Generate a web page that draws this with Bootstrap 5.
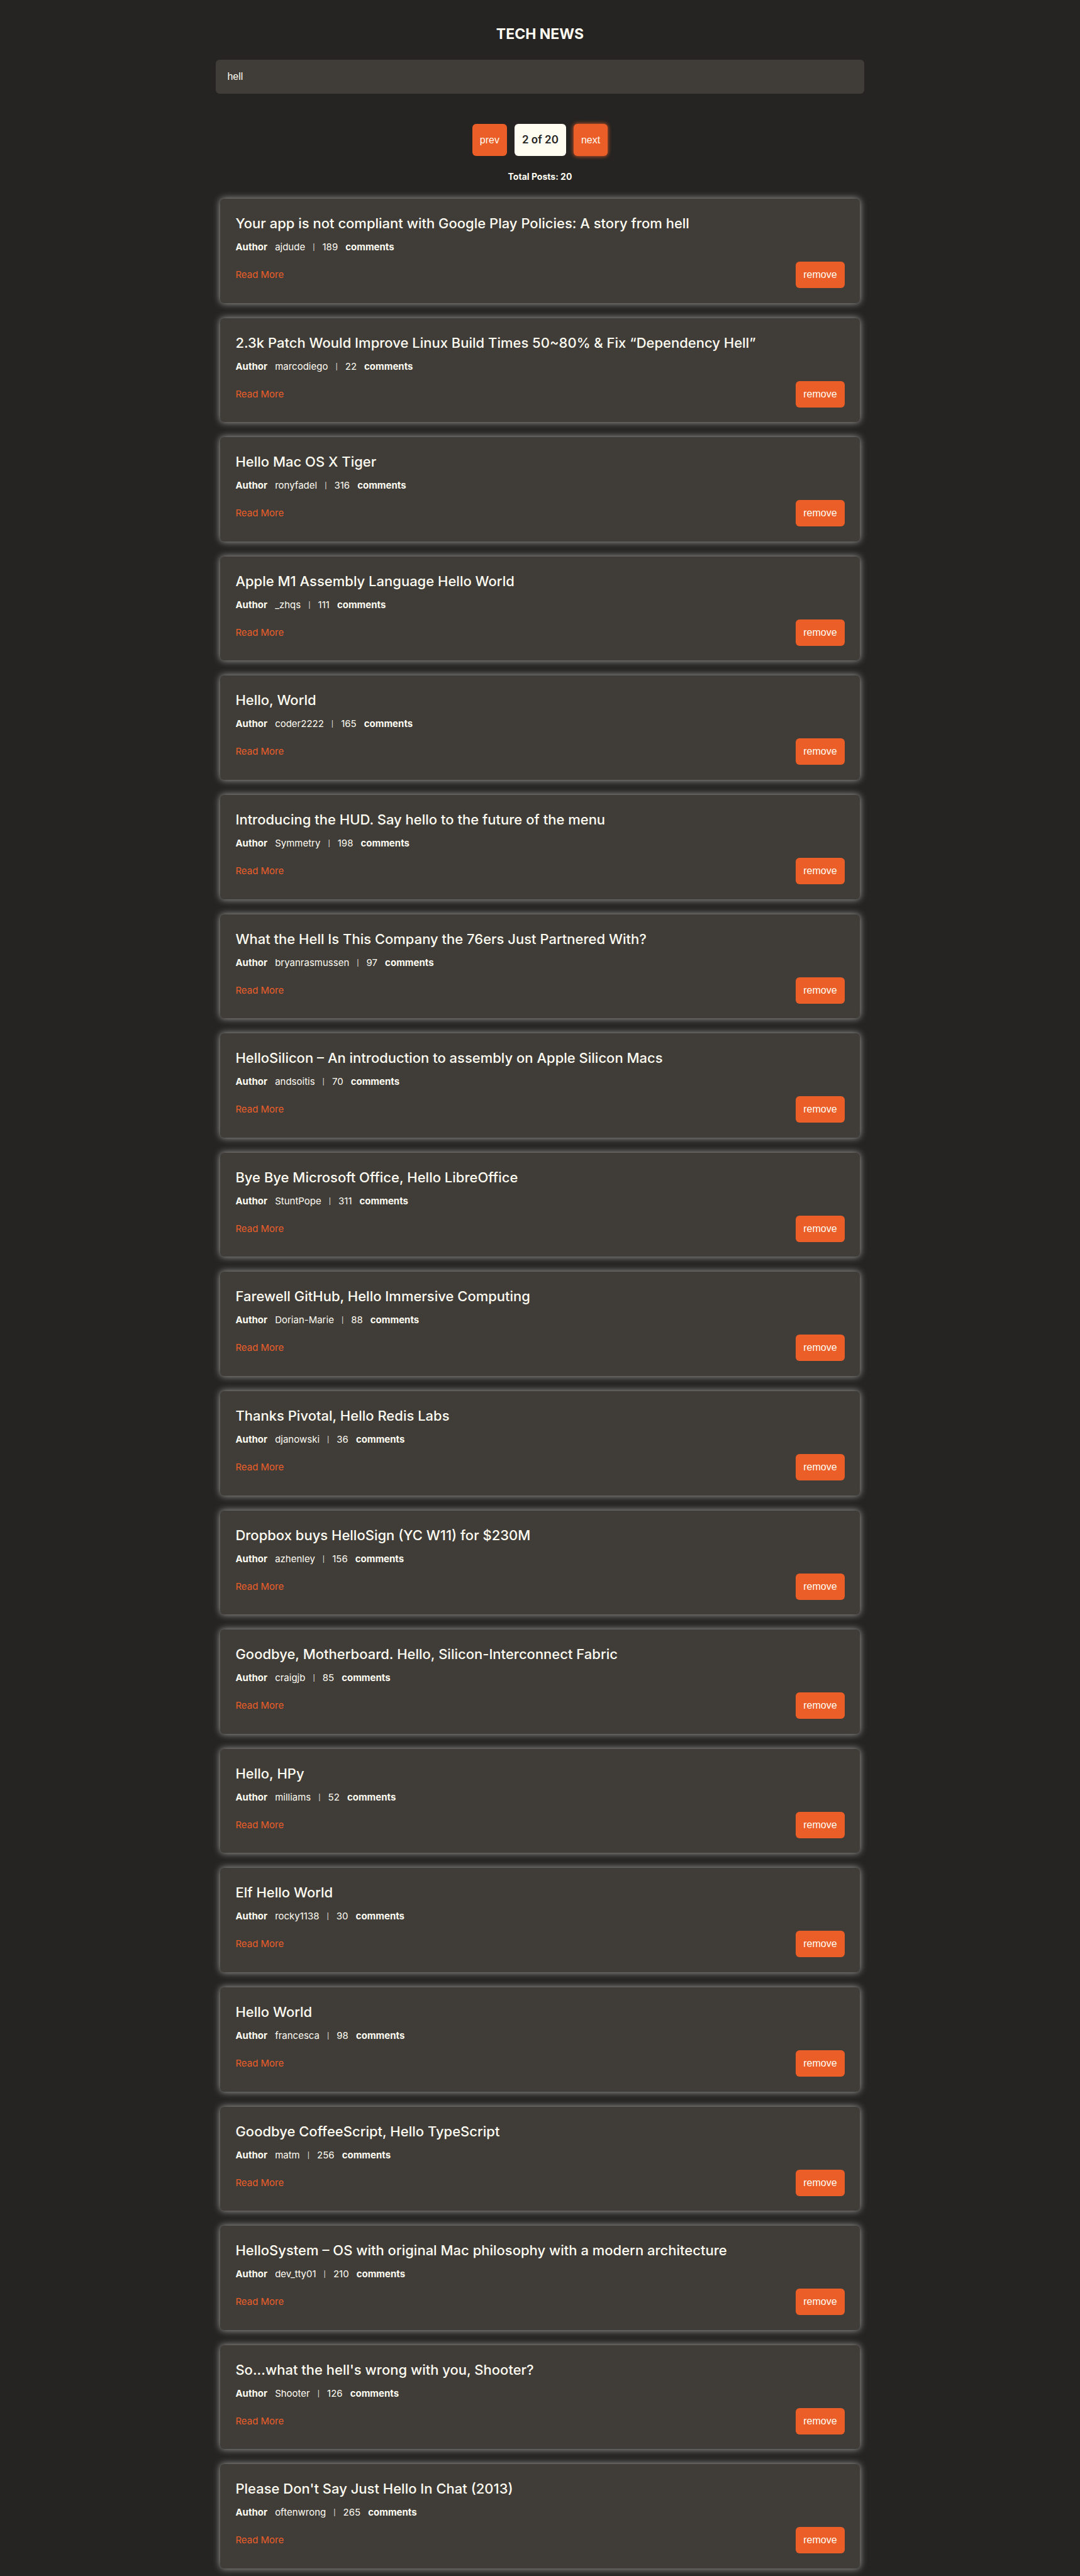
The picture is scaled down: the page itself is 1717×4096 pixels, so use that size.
<!DOCTYPE html>
<html lang="en">
<head>
<meta charset="utf-8">
<meta name="viewport" content="width=device-width, initial-scale=1">
<title>Tech News</title>
<link href="https://cdn.jsdelivr.net/npm/bootstrap@5.3.0/dist/css/bootstrap.min.css" rel="stylesheet">
<style>
:root{--ink:#252422;--panel:#403d39;--cream:#fffcf2;--flame:#eb5e28}
body{background:var(--ink);color:var(--cream);font-family:Inter,"Open Sans",sans-serif;font-size:15px;line-height:22px}
.page{width:60%;min-width:320px;padding:36px 0 12px}
.site-title{font-size:23px;font-weight:700;line-height:36px;margin-bottom:23px}
.search-box,.search-box:focus{background:var(--panel);color:var(--cream);border:0;border-radius:6px;padding:0 18px;height:54px;font:16px "Liberation Sans",Arial,sans-serif;box-shadow:none}
.pager{gap:12px;margin-top:48px}
.flame-btn{--bs-btn-bg:var(--flame);--bs-btn-color:var(--cream);--bs-btn-hover-bg:var(--flame);--bs-btn-hover-color:var(--cream);--bs-btn-active-bg:var(--flame);--bs-btn-active-color:var(--cream);border:0;border-radius:6px;padding:12px;font:16px/18px "Liberation Sans",Arial,sans-serif}
.flame-btn.glow{box-shadow:0 0 6px var(--flame)}
.page-count{background:var(--cream);color:var(--ink);border-radius:6px;padding:12px;font-size:17px;line-height:27px;font-weight:600}
.total{font-size:14px;font-weight:700;margin:22px 0 24px}
.posts{gap:24px;padding:0 7px}
.post{background:var(--panel);border-radius:6px;padding:24px 24px 23px;box-shadow:0 0 12px darkgray}
.post h2{font-size:22px;line-height:30px;font-weight:500;margin-bottom:12px}
.meta{gap:12px;margin-bottom:12px}
.meta b{font-weight:700}
.meta .bar{font-size:10px}
.more{color:var(--flame);text-decoration:none}
</style>
<script defer src="https://cdn.jsdelivr.net/npm/bootstrap@5.3.0/dist/js/bootstrap.bundle.min.js"></script>
</head>
<body>
<main class="page mx-auto min-vh-100 d-flex flex-column">
<h1 class="site-title text-center">TECH NEWS</h1>
<form><input class="search-box form-control" type="text" value="hell" aria-label="Search stories"></form>
<nav class="pager d-flex justify-content-center" aria-label="Pages">
<button type="button" class="btn flame-btn">prev</button>
<span class="page-count">2 of 20</span>
<button type="button" class="btn flame-btn glow">next</button>
</nav>
<p class="total text-center">Total Posts: 20</p>
<section class="posts d-flex flex-column flex-grow-1">
<article class="post flex-fill"><h2>Your app is not compliant with Google Play Policies: A story from hell</h2><div class="meta d-flex"><b>Author</b><span>ajdude</span><span class="bar">|</span><span>189</span><b>comments</b></div><div class="d-flex justify-content-between align-items-center"><a class="more" href="#">Read More</a><button type="button" class="btn flame-btn">remove</button></div></article>
<article class="post flex-fill"><h2>2.3k Patch Would Improve Linux Build Times 50~80% &amp; Fix “Dependency Hell”</h2><div class="meta d-flex"><b>Author</b><span>marcodiego</span><span class="bar">|</span><span>22</span><b>comments</b></div><div class="d-flex justify-content-between align-items-center"><a class="more" href="#">Read More</a><button type="button" class="btn flame-btn">remove</button></div></article>
<article class="post flex-fill"><h2>Hello Mac OS X Tiger</h2><div class="meta d-flex"><b>Author</b><span>ronyfadel</span><span class="bar">|</span><span>316</span><b>comments</b></div><div class="d-flex justify-content-between align-items-center"><a class="more" href="#">Read More</a><button type="button" class="btn flame-btn">remove</button></div></article>
<article class="post flex-fill"><h2>Apple M1 Assembly Language Hello World</h2><div class="meta d-flex"><b>Author</b><span>_zhqs</span><span class="bar">|</span><span>111</span><b>comments</b></div><div class="d-flex justify-content-between align-items-center"><a class="more" href="#">Read More</a><button type="button" class="btn flame-btn">remove</button></div></article>
<article class="post flex-fill"><h2>Hello, World</h2><div class="meta d-flex"><b>Author</b><span>coder2222</span><span class="bar">|</span><span>165</span><b>comments</b></div><div class="d-flex justify-content-between align-items-center"><a class="more" href="#">Read More</a><button type="button" class="btn flame-btn">remove</button></div></article>
<article class="post flex-fill"><h2>Introducing the HUD. Say hello to the future of the menu</h2><div class="meta d-flex"><b>Author</b><span>Symmetry</span><span class="bar">|</span><span>198</span><b>comments</b></div><div class="d-flex justify-content-between align-items-center"><a class="more" href="#">Read More</a><button type="button" class="btn flame-btn">remove</button></div></article>
<article class="post flex-fill"><h2>What the Hell Is This Company the 76ers Just Partnered With?</h2><div class="meta d-flex"><b>Author</b><span>bryanrasmussen</span><span class="bar">|</span><span>97</span><b>comments</b></div><div class="d-flex justify-content-between align-items-center"><a class="more" href="#">Read More</a><button type="button" class="btn flame-btn">remove</button></div></article>
<article class="post flex-fill"><h2>HelloSilicon – An introduction to assembly on Apple Silicon Macs</h2><div class="meta d-flex"><b>Author</b><span>andsoitis</span><span class="bar">|</span><span>70</span><b>comments</b></div><div class="d-flex justify-content-between align-items-center"><a class="more" href="#">Read More</a><button type="button" class="btn flame-btn">remove</button></div></article>
<article class="post flex-fill"><h2>Bye Bye Microsoft Office, Hello LibreOffice</h2><div class="meta d-flex"><b>Author</b><span>StuntPope</span><span class="bar">|</span><span>311</span><b>comments</b></div><div class="d-flex justify-content-between align-items-center"><a class="more" href="#">Read More</a><button type="button" class="btn flame-btn">remove</button></div></article>
<article class="post flex-fill"><h2>Farewell GitHub, Hello Immersive Computing</h2><div class="meta d-flex"><b>Author</b><span>Dorian-Marie</span><span class="bar">|</span><span>88</span><b>comments</b></div><div class="d-flex justify-content-between align-items-center"><a class="more" href="#">Read More</a><button type="button" class="btn flame-btn">remove</button></div></article>
<article class="post flex-fill"><h2>Thanks Pivotal, Hello Redis Labs</h2><div class="meta d-flex"><b>Author</b><span>djanowski</span><span class="bar">|</span><span>36</span><b>comments</b></div><div class="d-flex justify-content-between align-items-center"><a class="more" href="#">Read More</a><button type="button" class="btn flame-btn">remove</button></div></article>
<article class="post flex-fill"><h2>Dropbox buys HelloSign (YC W11) for $230M</h2><div class="meta d-flex"><b>Author</b><span>azhenley</span><span class="bar">|</span><span>156</span><b>comments</b></div><div class="d-flex justify-content-between align-items-center"><a class="more" href="#">Read More</a><button type="button" class="btn flame-btn">remove</button></div></article>
<article class="post flex-fill"><h2>Goodbye, Motherboard. Hello, Silicon-Interconnect Fabric</h2><div class="meta d-flex"><b>Author</b><span>craigjb</span><span class="bar">|</span><span>85</span><b>comments</b></div><div class="d-flex justify-content-between align-items-center"><a class="more" href="#">Read More</a><button type="button" class="btn flame-btn">remove</button></div></article>
<article class="post flex-fill"><h2>Hello, HPy</h2><div class="meta d-flex"><b>Author</b><span>milliams</span><span class="bar">|</span><span>52</span><b>comments</b></div><div class="d-flex justify-content-between align-items-center"><a class="more" href="#">Read More</a><button type="button" class="btn flame-btn">remove</button></div></article>
<article class="post flex-fill"><h2>Elf Hello World</h2><div class="meta d-flex"><b>Author</b><span>rocky1138</span><span class="bar">|</span><span>30</span><b>comments</b></div><div class="d-flex justify-content-between align-items-center"><a class="more" href="#">Read More</a><button type="button" class="btn flame-btn">remove</button></div></article>
<article class="post flex-fill"><h2>Hello World</h2><div class="meta d-flex"><b>Author</b><span>francesca</span><span class="bar">|</span><span>98</span><b>comments</b></div><div class="d-flex justify-content-between align-items-center"><a class="more" href="#">Read More</a><button type="button" class="btn flame-btn">remove</button></div></article>
<article class="post flex-fill"><h2>Goodbye CoffeeScript, Hello TypeScript</h2><div class="meta d-flex"><b>Author</b><span>matm</span><span class="bar">|</span><span>256</span><b>comments</b></div><div class="d-flex justify-content-between align-items-center"><a class="more" href="#">Read More</a><button type="button" class="btn flame-btn">remove</button></div></article>
<article class="post flex-fill"><h2>HelloSystem – OS with original Mac philosophy with a modern architecture</h2><div class="meta d-flex"><b>Author</b><span>dev_tty01</span><span class="bar">|</span><span>210</span><b>comments</b></div><div class="d-flex justify-content-between align-items-center"><a class="more" href="#">Read More</a><button type="button" class="btn flame-btn">remove</button></div></article>
<article class="post flex-fill"><h2>So...what the hell's wrong with you, Shooter?</h2><div class="meta d-flex"><b>Author</b><span>Shooter</span><span class="bar">|</span><span>126</span><b>comments</b></div><div class="d-flex justify-content-between align-items-center"><a class="more" href="#">Read More</a><button type="button" class="btn flame-btn">remove</button></div></article>
<article class="post flex-fill"><h2>Please Don't Say Just Hello In Chat (2013)</h2><div class="meta d-flex"><b>Author</b><span>oftenwrong</span><span class="bar">|</span><span>265</span><b>comments</b></div><div class="d-flex justify-content-between align-items-center"><a class="more" href="#">Read More</a><button type="button" class="btn flame-btn">remove</button></div></article>
</section>
</main>
</body>
</html>
